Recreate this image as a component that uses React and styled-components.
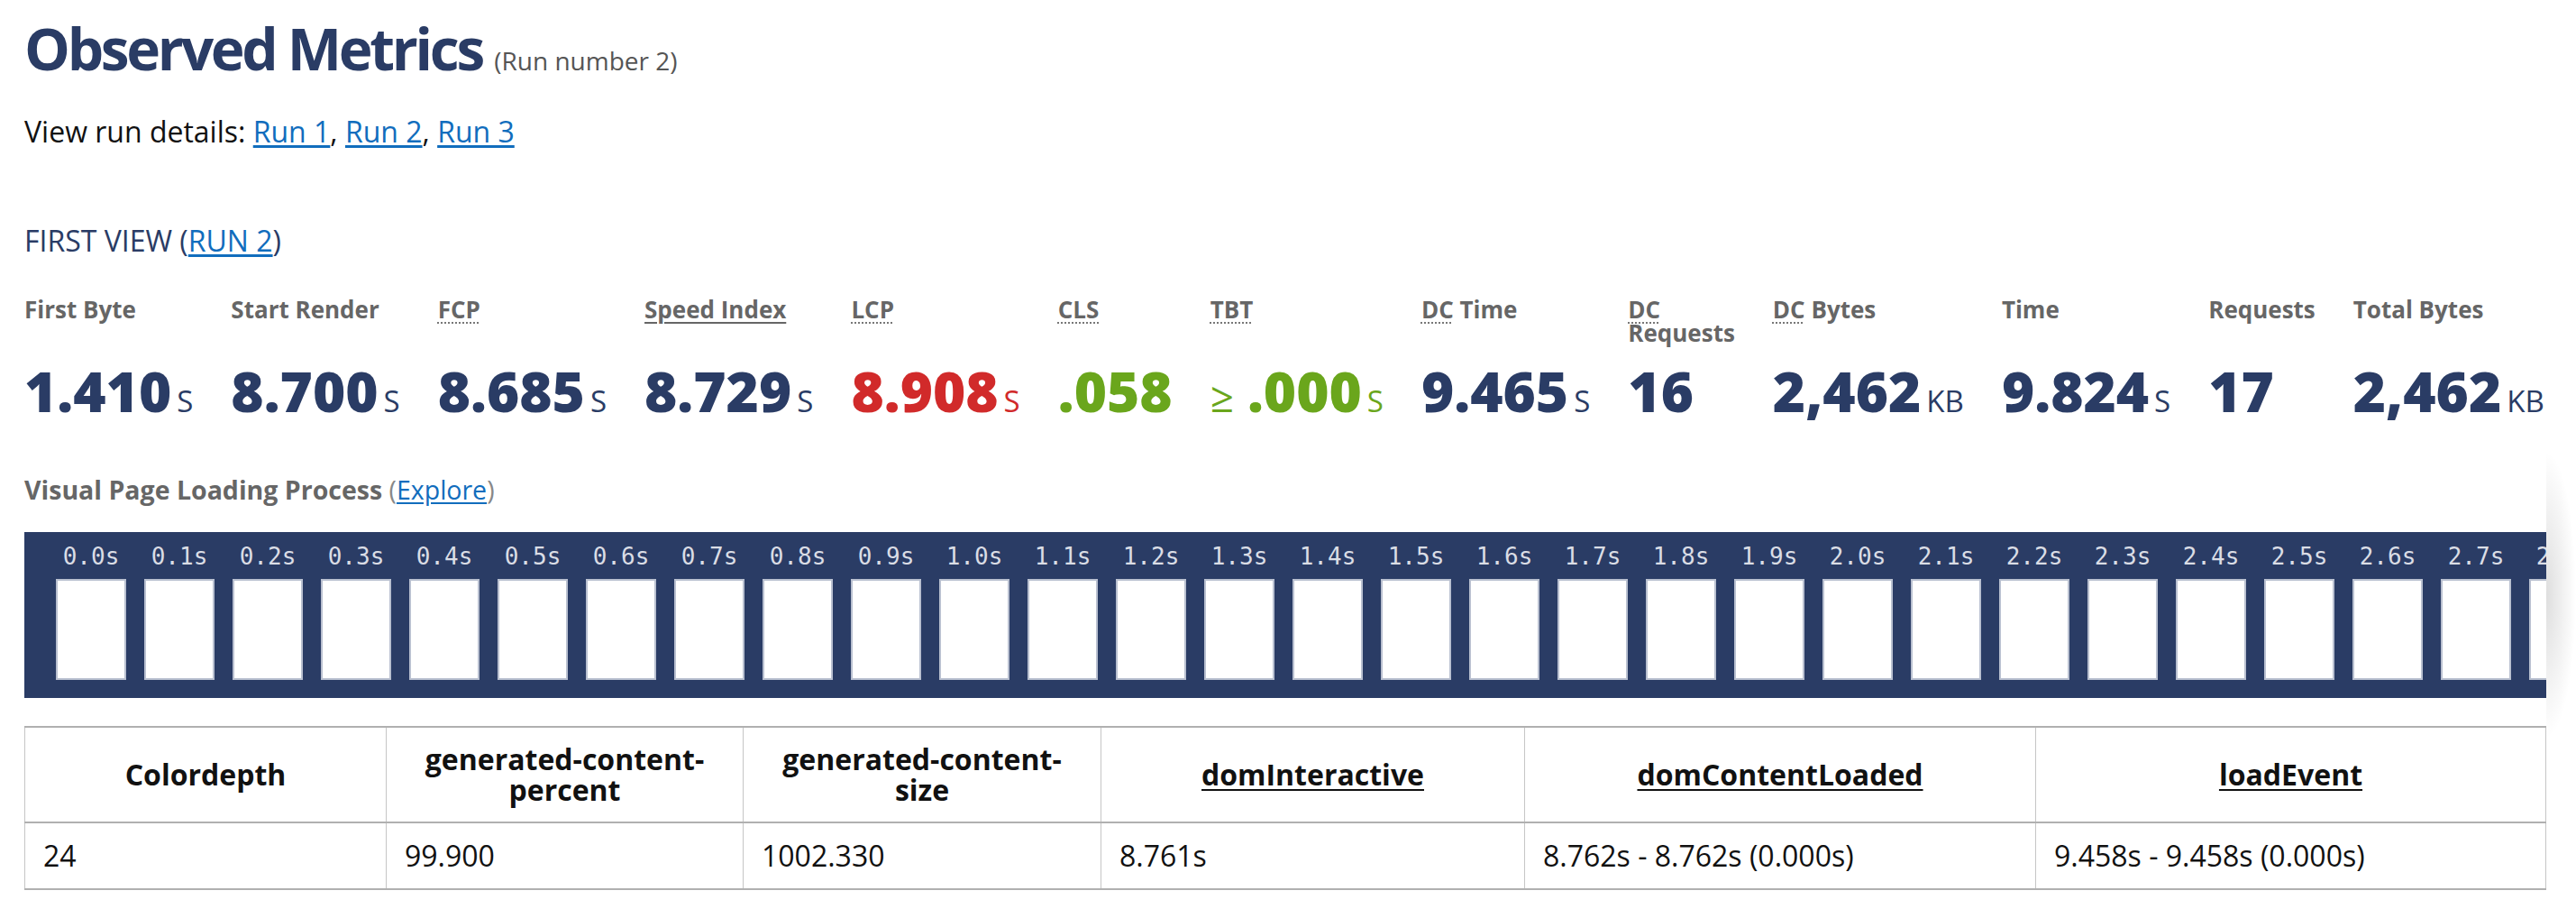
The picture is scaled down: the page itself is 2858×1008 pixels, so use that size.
import React from "react";
import styled, { createGlobalStyle } from "styled-components";

const GlobalStyle = createGlobalStyle`
  html, body { margin: 0; padding: 0; background: #fff; }
  body { font-family: "Open Sans", "Liberation Sans", sans-serif; color: #111; }
`;

const NAVY = "#2a3c65";

const Page = styled.main`
  padding: 14px 33px 40px 27px;
`;

const Title = styled.h1`
  margin: 0;
  font-size: 64px;
  line-height: 80px;
  font-weight: 700;
  letter-spacing: -3.3px;
  color: ${NAVY};
`;

const RunNumber = styled.span`
  font-size: 28px;
  font-weight: 400;
  letter-spacing: 0;
  color: #555;
`;

const RunLinks = styled.p`
  margin: 16px 0 0;
  font-size: 32px;
  line-height: 45px;
  color: #111;
`;

const Link = styled.a`
  color: #116dbd;
  text-decoration: underline;
  text-underline-offset: 3px;
`;

const ViewHeading = styled.h2`
  margin: 76px 0 0;
  font-size: 32px;
  line-height: 45px;
  font-weight: 400;
  color: ${NAVY};
`;

const Metrics = styled.ul`
  list-style: none;
  margin: 41px 0 0;
  padding: 0;
  display: flex;
  gap: 42px;
`;

const Metric = styled.li`
  width: min-content;
  display: flex;
  flex-direction: column;
`;

const MetricLabel = styled.div`
  height: 52px;
  font-size: 26px;
  line-height: 26px;
  font-weight: 700;
  color: #666;
`;

const Abbr = styled.abbr`
  text-decoration: underline dotted #777;
  text-decoration-thickness: 2px;
  text-underline-offset: 4px;
`;

const LabelLink = styled.a`
  color: #666;
  text-decoration: underline;
  text-decoration-thickness: 2px;
  text-underline-offset: 4px;
`;

const colors = { good: "#6aa61c", bad: "#d12a2a", normal: NAVY };

const MetricValue = styled.div`
  margin-top: 11px;
  white-space: nowrap;
  font-size: 62px;
  line-height: 80px;
  font-weight: 800;
  color: ${(p) => colors[p.$tone || "normal"]};
`;

const Unit = styled.span`
  margin-left: 6px;
  font-size: 33px;
  font-weight: 400;
  text-transform: uppercase;
`;

const Prefix = styled.span`
  margin-right: 15px;
  font-size: 46px;
  font-weight: 400;
`;

const VisualHeading = styled.h3`
  margin: 38px 0 0;
  font-size: 28.5px;
  line-height: 40px;
  font-weight: 700;
  color: #666;
`;

const Paren = styled.span`
  font-weight: 400;
  color: #888;
`;

const PlainLink = styled(Link)`
  font-weight: 400;
`;

const FilmstripWrap = styled.div`
  position: relative;
  margin-top: 27px;
`;

const Filmstrip = styled.div`
  display: flex;
  overflow: hidden;
  background: ${NAVY};
  padding: 12px 0 20px 25px;
`;

const Frame = styled.div`
  flex: 0 0 98px;
  display: flex;
  flex-direction: column;
  align-items: center;
`;

const FrameTime = styled.div`
  font-family: "DejaVu Sans Mono", "Liberation Mono", monospace;
  font-size: 26px;
  line-height: 30px;
  color: #dadde5;
`;

const Thumb = styled.div`
  box-sizing: border-box;
  width: 78px;
  height: 112px;
  margin-top: 10px;
  background: #fff;
  border: 2px solid #b9c0d0;
`;

const ScrollShadow = styled.div`
  position: absolute;
  left: 100%;
  top: -90px;
  bottom: -45px;
  width: 33px;
  background: radial-gradient(ellipse 100% 50% at 0% 50%, rgba(0, 0, 0, 0.13), rgba(0, 0, 0, 0));
  pointer-events: none;
`;

const Table = styled.table`
  margin-top: 31px;
  width: 100%;
  border-collapse: collapse;
  table-layout: fixed;
`;

const Col = styled.col`
  width: ${(p) => p.$w}px;
`;

const Th = styled.th`
  height: 104px;
  padding: 0 20px;
  font-size: 32px;
  line-height: 34px;
  font-weight: 700;
  color: #111;
  text-align: center;
  border-top: 2px solid #b0b0b0;
  border-bottom: 2px solid #b0b0b0;
  border-left: 1px solid #c6c6c6;
  border-right: 1px solid #c6c6c6;
`;

const ThLink = styled.a`
  color: #111;
  text-decoration: underline;
  text-decoration-thickness: 2px;
  text-underline-offset: 4px;
`;

const Td = styled.td`
  height: 72px;
  padding: 0 20px;
  font-size: 32px;
  line-height: 40px;
  color: #111;
  text-align: left;
  border-bottom: 2px solid #b0b0b0;
  border-left: 1px solid #c6c6c6;
  border-right: 1px solid #c6c6c6;
`;

const metrics = [
  { label: "First Byte", value: "1.410", unit: "s" },
  { label: "Start Render", value: "8.700", unit: "s" },
  { label: <Abbr title="First Contentful Paint">FCP</Abbr>, value: "8.685", unit: "s" },
  { label: <LabelLink href="#">Speed Index</LabelLink>, value: "8.729", unit: "s" },
  { label: <Abbr title="Largest Contentful Paint">LCP</Abbr>, value: "8.908", unit: "s", tone: "bad" },
  { label: <Abbr title="Cumulative Layout Shift">CLS</Abbr>, value: ".058", tone: "good" },
  { label: <Abbr title="Total Blocking Time">TBT</Abbr>, prefix: "≥", value: ".000", unit: "s", tone: "good" },
  { label: <><Abbr title="Document Complete">DC</Abbr> Time</>, value: "9.465", unit: "s" },
  { label: <><Abbr title="Document Complete">DC</Abbr> Requests</>, value: "16" },
  { label: <><Abbr title="Document Complete">DC</Abbr> Bytes</>, value: "2,462", unit: "KB" },
  { label: "Time", value: "9.824", unit: "s" },
  { label: "Requests", value: "17" },
  { label: "Total Bytes", value: "2,462", unit: "KB" },
];

const frames = Array.from({ length: 30 }, (_, i) => `${(i / 10).toFixed(1)}s`);

const columns = [
  { w: 401, head: "Colordepth", value: "24" },
  { w: 396, head: "generated-content-percent", value: "99.900" },
  { w: 397, head: "generated-content-size", value: "1002.330" },
  { w: 470, head: <ThLink href="#">domInteractive</ThLink>, value: "8.761s" },
  { w: 567, head: <ThLink href="#">domContentLoaded</ThLink>, value: "8.762s - 8.762s (0.000s)" },
  { w: 566, head: <ThLink href="#">loadEvent</ThLink>, value: "9.458s - 9.458s (0.000s)" },
];

export default function App() {
  return (
    <>
      <GlobalStyle />
      <Page>
        <Title>
          Observed Metrics <RunNumber>(Run number 2)</RunNumber>
        </Title>
        <RunLinks>
          View run details: <Link href="#">Run 1</Link>, <Link href="#">Run 2</Link>,{" "}
          <Link href="#">Run 3</Link>
        </RunLinks>

        <ViewHeading>
          FIRST VIEW (<Link href="#">RUN 2</Link>)
        </ViewHeading>

        <Metrics>
          {metrics.map((m, i) => (
            <Metric key={i}>
              <MetricLabel>{m.label}</MetricLabel>
              <MetricValue $tone={m.tone}>
                {m.prefix && <Prefix>{m.prefix}</Prefix>}
                {m.value}
                {m.unit && <Unit>{m.unit}</Unit>}
              </MetricValue>
            </Metric>
          ))}
        </Metrics>

        <VisualHeading>
          Visual Page Loading Process <Paren>(</Paren>
          <PlainLink href="#">Explore</PlainLink>
          <Paren>)</Paren>
        </VisualHeading>

        <FilmstripWrap>
          <Filmstrip>
            {frames.map((t) => (
              <Frame key={t}>
                <FrameTime>{t}</FrameTime>
                <Thumb />
              </Frame>
            ))}
          </Filmstrip>
          <ScrollShadow />
        </FilmstripWrap>

        <Table>
          <colgroup>
            {columns.map((c, i) => (
              <Col key={i} $w={c.w} />
            ))}
          </colgroup>
          <thead>
            <tr>
              {columns.map((c, i) => (
                <Th key={i}>{c.head}</Th>
              ))}
            </tr>
          </thead>
          <tbody>
            <tr>
              {columns.map((c, i) => (
                <Td key={i}>{c.value}</Td>
              ))}
            </tr>
          </tbody>
        </Table>
      </Page>
    </>
  );
}
